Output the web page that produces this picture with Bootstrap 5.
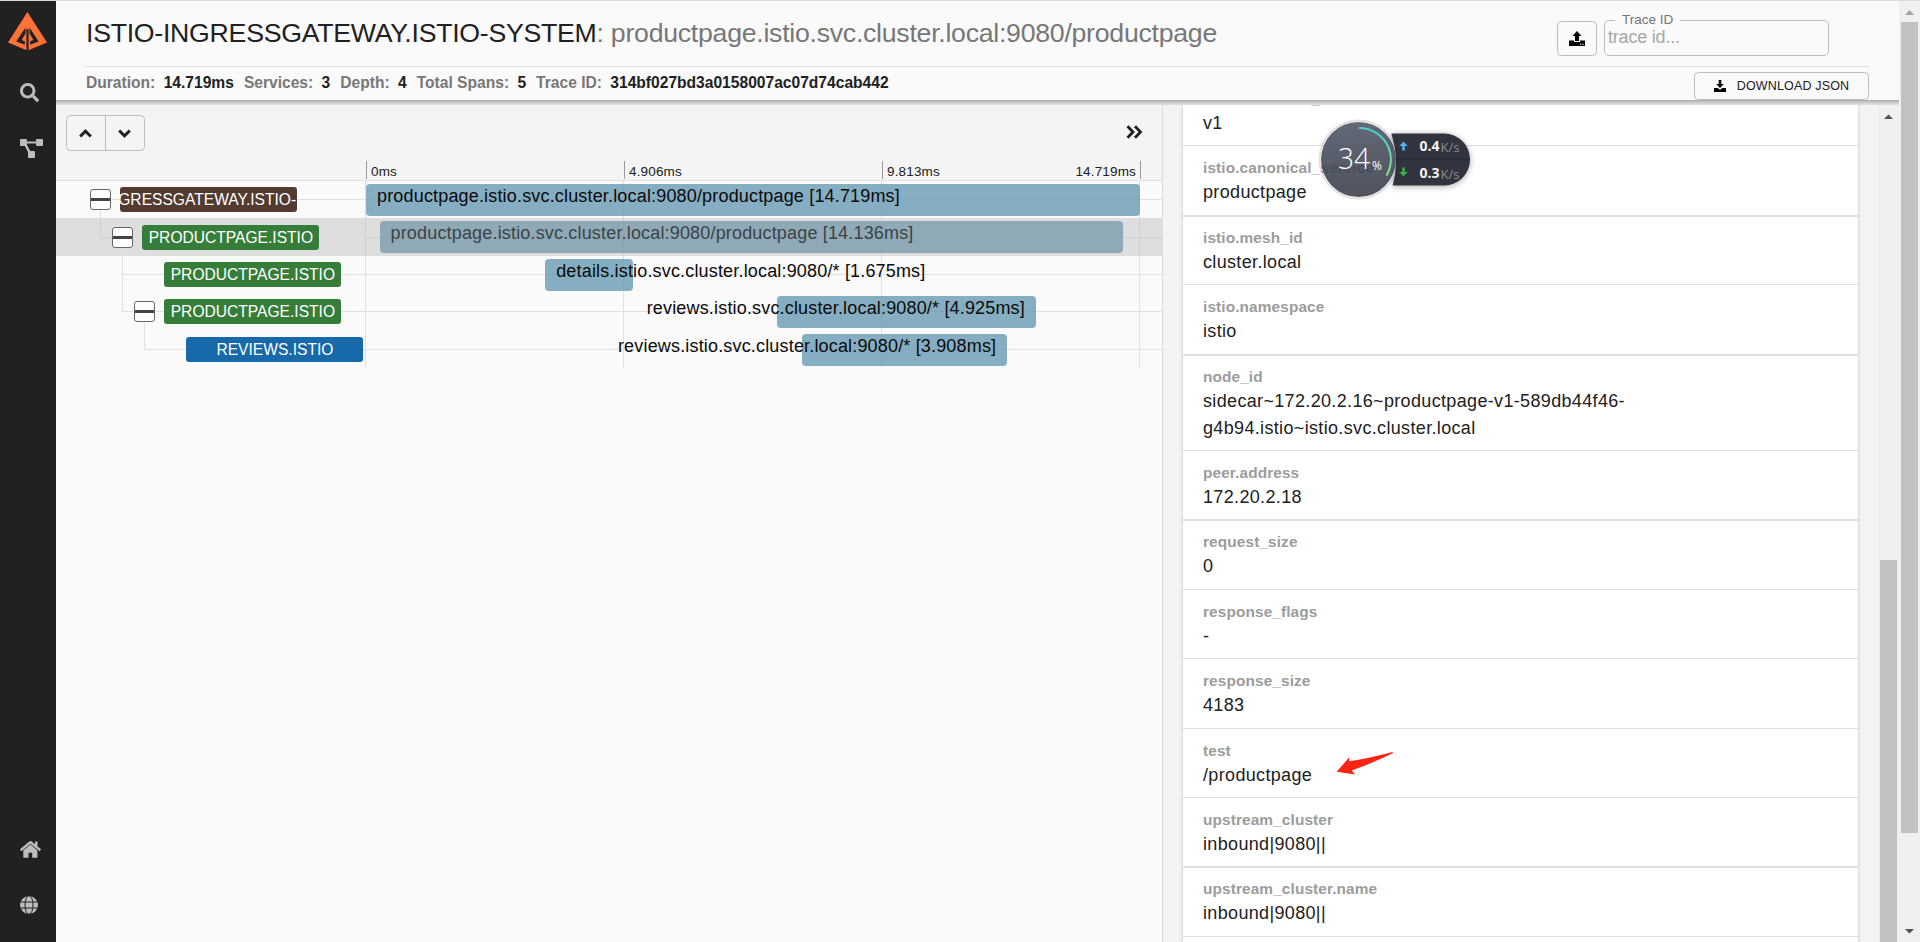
<!DOCTYPE html>
<html lang="en">
<head>
<meta charset="utf-8">
<meta name="viewport" content="width=device-width, initial-scale=1">
<title>Zipkin trace</title>
<link href="https://cdn.jsdelivr.net/npm/bootstrap@5.3.0/dist/css/bootstrap.min.css" rel="stylesheet">
<script src="https://cdn.jsdelivr.net/npm/bootstrap@5.3.0/dist/js/bootstrap.bundle.min.js"></script>
<style>
body{font-family:"Liberation Sans",Arial,sans-serif;font-size:18px;line-height:27px;letter-spacing:.169px;color:#212121;background:#fafafa;height:942px}
svg{display:block;flex:none}
.app{height:942px;border-top:1px solid #d9dcdb}
.side{width:56px;background:#212121;flex:none}
.side svg{fill:#bdbdbd;margin-left:20px}
.main{width:1843px;flex:none}
.top{height:99px;padding:0 30px;background:#fafafa;flex:none;position:relative;z-index:2}
.shade{height:5px;flex:none;background:linear-gradient(#a6a6a6,#c4c4c4 35%,#e2e2e2)}
.title-row{height:66px;border-bottom:1px solid #dfdfdf}
.trace-title{font-size:26.700px;line-height:32px;letter-spacing:-.270px;padding-top:16px;white-space:nowrap;margin:0;font-weight:400}
.trace-title span{color:#777}
.stats{font-size:15.6px;font-weight:700;letter-spacing:0;line-height:22px;padding-top:5px;gap:10px;color:#777}
.stats b{color:#212121;margin-left:4px}
.obtn{border:1px solid #bdbdbd;border-radius:4.5px;background:transparent;display:flex;align-items:center;justify-content:center;padding:0;color:#212121}
.up{width:40px;height:35px;margin-top:20px;margin-right:7px}
.field{width:225px;height:46px;margin:10px 40px 0 0}
.field fieldset{height:45px;border:1px solid #bdbdbd;border-radius:5px;padding:0 3px;min-width:0}
.field legend{float:none;width:auto;font-size:13.5px;line-height:18px;letter-spacing:0;color:#757575;margin:0 0 0 7px;padding:0 7px}
.field .ph{color:#a7a7a7;line-height:20px;margin-top:-2px;letter-spacing:-.2px}
.dl{width:175px;height:28px;font-size:12.500px;letter-spacing:.150px;gap:11px;margin-top:5px;line-height:20px}
.left{width:1107px;border-right:1px solid #dcdcdc;flex:none}
.tools{height:76px;background:#f4f4f4;border-bottom:1px solid #e0e0e0;position:relative}
.pair{margin:10px 0 0 10px;width:79px;height:36px}
.pair div{flex:1;height:100%;display:flex;align-items:center;justify-content:center;padding-right:1px}
.pair div+div{border-left:1px solid #bdbdbd}
.axis{position:absolute;left:310px;bottom:1px;width:775px;height:18px;font-size:13.5px;line-height:22px;letter-spacing:.16px}
.axis div{width:258px;flex:none;border-left:1px solid #999;padding-left:4px}
.axis div:last-child{width:259px;border-right:1px solid #999;padding-right:4px}
.chart{position:relative;height:187px}
.lines{position:absolute;left:0;top:0}
.span-row{height:37.4px;position:relative}
.node{width:310px;flex:none}
.tog{width:21px;height:21px;border:1px solid #666;border-radius:3px;background:linear-gradient(#fff 8px,#444 8px,#444 11px,#fff 11px);flex:none}
.svc{width:177px;height:25px;border-radius:3px;color:#fff;font-size:15.6px;line-height:26px;letter-spacing:0;overflow:hidden;display:flex;justify-content:center;white-space:nowrap;flex:none}
.track{width:774px;height:100%;padding-top:3px;flex:none}
.dur{height:32px;border-radius:4px;background:rgba(101,153,178,.78);position:relative;color:#0a0a0a}
.dur span{position:absolute;top:-1px;left:11px;line-height:27px;white-space:nowrap}
.dur.rt span{left:auto;right:11px}
.dur.picked{color:#3c4246;background:rgba(120,155,171,.78)}
.right{background:#f4f4f4;width:715px;padding-left:19px;overflow:hidden;flex:none}
.paper{width:677px;background:#fff;border:1px solid #dedede;margin-top:-29px;box-shadow:0 1px 3px rgba(0,0,0,.1)}
.tag{height:69.4px;border-bottom:1px solid #e0e0e0;padding:11px 20px 0}
.tag.two{height:96.4px}
.tag.thick{box-shadow:0 1px 0 #e0e0e0}
.tag h6{font-size:15.4px;line-height:22px;font-weight:700;letter-spacing:.11px;color:#9c9c9c;margin:0}
.tag p{margin:0;width:440px;letter-spacing:.340px}
.bar-v{width:21px;background:#f0f0f0;flex:none;padding:0 2px}
.knob{width:17px;background:#c1c1c1}
.meter{position:absolute;left:1318px;top:117px;z-index:5}
.mark-arrow{position:absolute;left:1336px;top:750px;z-index:5}
</style>
</head>
<body class="overflow-hidden">
<div class="app d-flex">
  <nav class="side d-flex flex-column">
    <svg width="40" height="40" viewBox="0 0 40 40" style="margin:11px 0 0 8px;fill:#fe7139"><path d="M19.4 0 39 30.500 20.300 38.200V17.500H18.700V38.200L0 30.500Z"/><path d="M17.500 15.500 8.300 29.500 16.800 32.800V29.300L13.600 28 17.500 21.500ZM21.500 15.500 30.700 29.500 22.200 32.800V29.300L25.400 28 21.500 21.500ZM18.600 17h1.800V38.500h-1.800Z" fill="#212121"/></svg>
    <svg width="19" height="19" viewBox="0 0 512 512" style="margin-top:31px"><path d="M505 442.700 405.300 343c-4.500-4.500-10.600-7-17-7H372c27.600-35.300 44-79.700 44-128C416 93.100 322.900 0 208 0S0 93.100 0 208s93.100 208 208 208c48.300 0 92.700-16.400 128-44v16.300c0 6.400 2.500 12.500 7 17l99.700 99.700c9.400 9.400 24.600 9.400 33.900 0l28.300-28.300c9.400-9.400 9.400-24.600.1-34zM208 336c-70.700 0-128-57.200-128-128 0-70.700 57.200-128 128-128 70.700 0 128 57.200 128 128 0 70.700-57.200 128-128 128z"/></svg>
    <svg width="23" height="19" viewBox="0 0 23 19" style="margin-top:37px"><path d="M1 0h5q1 0 1 1v1.500h9V1q0-1 1-1h5q1 0 1 1v5q0 1-1 1h-5q-1 0-1-1V4.500H7V6l3.200 6H14q1 0 1 1v5q0 1-1 1H9q-1 0-1-1v-5L4.800 7H1Q0 7 0 6V1Q0 0 1 0Z"/></svg>
    <svg class="mt-auto" width="21" height="17" viewBox="0 0 21 17"><path d="M10.500 3.500 3.300 9.500V16q0 .7.700.7h4.500v-5h3.700v5h4.500q.7 0 .7-.7V9.500ZM20.700 8 17.500 5.300V.5H15v2.700L11.700.5q-1.200-1-2.400 0L.3 8q-.5.500 0 1l.7.800q.5.400 1 0l8.500-7 8.500 7q.5.400 1 0l.7-.8q.5-.500 0-1Z"/></svg>
    <svg width="18" height="18" viewBox="0 0 18 18" style="margin-top:38px;margin-bottom:28px"><circle cx="9" cy="9" r="9"/><g fill="none" stroke="#212121" stroke-width="1"><ellipse cx="9" cy="9" rx="4" ry="9.300"/><path d="M0 6h18M0 12h18"/></g></svg>
  </nav>
  <div class="main d-flex flex-column">
    <header class="top">
      <div class="title-row d-flex">
        <h1 class="trace-title me-auto">ISTIO-INGRESSGATEWAY.ISTIO-SYSTEM<span>: productpage.istio.svc.cluster.local:9080/productpage</span></h1>
        <button class="obtn up"><svg width="16" height="15" viewBox="0 0 16 15"><path d="M8 0l4.500 5H10v5H6V5H3.500ZM0 9.500h5V11h6V9.500h5V15H0Z"/><path d="M11 12.700h1.300v1H11zM13.400 12.700h1.300v1h-1.300z" fill="#fff"/></svg></button>
        <div class="field"><fieldset><legend>Trace ID</legend><div class="ph">trace id...</div></fieldset></div>
      </div>
      <div class="d-flex">
        <div class="stats d-flex me-auto"><span>Duration: <b>14.719ms</b></span><span>Services: <b>3</b></span><span>Depth: <b>4</b></span><span>Total Spans: <b>5</b></span><span>Trace ID: <b>314bf027bd3a0158007ac07d74cab442</b></span></div>
        <button class="obtn dl"><svg width="12" height="12" viewBox="0 0 12 12"><path d="M4.700 0h2.600v4h2.500L6 8 2.200 4h2.500ZM0 8h3.500L6 9.800 8.500 8H12v4H0Z"/></svg>DOWNLOAD JSON</button>
      </div>
    </header>
    <div class="shade"></div>
    <div class="d-flex flex-grow-1" style="min-height:0">
      <section class="left">
        <div class="tools d-flex align-items-start justify-content-between">
          <div class="obtn pair"><div><svg width="13" height="9" viewBox="0 0 13 9" fill="none" stroke="#212121" stroke-width="3"><path d="M1.200 7.500 6.500 2.200 11.800 7.500"/></svg></div><div><svg width="13" height="9" viewBox="0 0 13 9" fill="none" stroke="#212121" stroke-width="3"><path d="M1.200 1.500 6.500 6.800 11.800 1.500"/></svg></div></div>
          <svg width="17" height="14" viewBox="0 0 17 14" fill="none" stroke="#212121" stroke-width="2.800" style="margin:20px 19px 0 0"><path d="M1.500 1.200 7 7 1.500 12.800M9 1.200 14.500 7 9 12.800"/></svg>
          <div class="axis d-flex"><div>0ms</div><div>4.906ms</div><div class="d-flex justify-content-between"><span>9.813ms</span><span>14.719ms</span></div></div>
        </div>
        <div class="chart">
          <svg class="lines" width="1106" height="187" viewBox="0 0 1106 187" fill="none" stroke="#e0e0e0" shape-rendering="crispEdges"><path d="M0 37h1106v38H0z" fill="#dedede" stroke="none"/><path d="M44 18.500H1106M44 18.500V56M66 93.500H1106M66 56V131M66 130.500H1106M88 131V168.500H1106M309.500 0V187M567.500 0V187M825.500 0V187M1083.500 0V187"/><path d="M309 56.500H1106M309.500 37V75M567.500 37V75M825.500 37V75M1083.500 37V75M44.500 37V56H66" stroke="#d0d0d0"/></svg>
          <div class="span-row d-flex"><div class="node d-flex align-items-center" style="padding-left:34px;gap:9px"><i class="tog"></i><div class="svc" style="background:#543b32">ISTIO-INGRESSGATEWAY.ISTIO-SYSTEM</div></div><div class="track"><div class="dur" style="width:100%"><span>productpage.istio.svc.cluster.local:9080/productpage [14.719ms]</span></div></div></div>
          <div class="span-row d-flex"><div class="node d-flex align-items-center" style="padding-left:56px;gap:9.400px"><i class="tog"></i><div class="svc" style="background:#367d3a">PRODUCTPAGE.ISTIO</div></div><div class="track"><div class="dur picked" style="margin-left:1.75%;width:96.040%"><span>productpage.istio.svc.cluster.local:9080/productpage [14.136ms]</span></div></div></div>
          <div class="span-row d-flex"><div class="node d-flex align-items-center" style="padding-left:108.400px"><div class="svc" style="background:#367d3a">PRODUCTPAGE.ISTIO</div></div><div class="track"><div class="dur" style="margin-left:23.150%;width:11.380%"><span>details.istio.svc.cluster.local:9080/* [1.675ms]</span></div></div></div>
          <div class="span-row d-flex"><div class="node d-flex align-items-center" style="padding-left:78px;gap:9.400px"><i class="tog"></i><div class="svc" style="background:#367d3a">PRODUCTPAGE.ISTIO</div></div><div class="track"><div class="dur rt" style="margin-left:53.100%;width:33.460%"><span>reviews.istio.svc.cluster.local:9080/* [4.925ms]</span></div></div></div>
          <div class="span-row d-flex"><div class="node d-flex align-items-center" style="padding-left:130.400px"><div class="svc" style="background:#1769aa">REVIEWS.ISTIO</div></div><div class="track"><div class="dur rt" style="margin-left:56.300%;width:26.550%"><span>reviews.istio.svc.cluster.local:9080/* [3.908ms]</span></div></div></div>
        </div>
      </section>
      <section class="right">
        <div class="paper">
          <div class="tag"><h6>istio.canonical_revision</h6><p>v1</p></div>
          <div class="tag thick"><h6>istio.canonical_service</h6><p>productpage</p></div>
          <div class="tag"><h6>istio.mesh_id</h6><p>cluster.local</p></div>
          <div class="tag thick"><h6>istio.namespace</h6><p>istio</p></div>
          <div class="tag two"><h6>node_id</h6><p>sidecar~172.20.2.16~productpage-v1-589db44f46-<br>g4b94.istio~istio.svc.cluster.local</p></div>
          <div class="tag thick"><h6>peer.address</h6><p>172.20.2.18</p></div>
          <div class="tag"><h6>request_size</h6><p>0</p></div>
          <div class="tag"><h6>response_flags</h6><p>-</p></div>
          <div class="tag"><h6>response_size</h6><p>4183</p></div>
          <div class="tag"><h6>test</h6><p>/productpage</p></div>
          <div class="tag thick"><h6>upstream_cluster</h6><p>inbound|9080||</p></div>
          <div class="tag"><h6>upstream_cluster.name</h6><p>inbound|9080||</p></div>
          <div class="tag"></div>
        </div>
      </section>
      <div class="bar-v d-flex flex-column"><svg width="17" height="21" viewBox="0 0 17 21"><path d="M4 14h9L8.500 9.500Z" fill="#505050"/></svg><div class="knob flex-grow-1" style="margin-top:434px"></div></div>
    </div>
  </div>
  <div class="bar-v d-flex flex-column"><svg width="17" height="21" viewBox="0 0 17 21"><path d="M4 14h9L8.500 9Z" fill="#a3a3a3"/></svg><div class="knob" style="height:811px"></div><svg class="mt-auto" width="17" height="21" viewBox="0 0 17 21"><path d="M4 8h9L8.500 12.500Z" fill="#505050"/></svg></div>
</div>
<svg class="meter" width="160" height="90" viewBox="0 0 160 90" font-family="Open Sans, Noto Sans, sans-serif" letter-spacing="0">
  <defs><linearGradient id="g" x1="0" y1="0" x2="0" y2="1"><stop offset="0" stop-color="#43d0cd"/><stop offset="1" stop-color="#8fdc8a"/></linearGradient><linearGradient id="c" x1="0" y1="0" x2="0" y2="1"><stop offset="0" stop-color="#4b5263"/><stop offset="1" stop-color="#353947"/></linearGradient><clipPath id="p"><path d="M66 0h94v90H66q24-45 0-90Z"/></clipPath></defs>
  <g style="filter:drop-shadow(0 1px 3px rgba(0,0,0,.35))"><rect x="50" y="16.500" width="102" height="52" rx="26" fill="#31343e" clip-path="url(#p)"/></g>
  <circle cx="40.500" cy="42.500" r="39" fill="none" stroke="#000" stroke-opacity=".12" stroke-width="2"/>
  <circle cx="40.500" cy="42.500" r="37.500" fill="url(#c)" fill-opacity=".87"/>
  <path d="M78 42.500h74" stroke="#2a2d36"/>
  <path d="M41 11A31.500 31.500 0 0 1 68.500 58.500" fill="none" stroke="url(#g)" stroke-width="2"/>
  <text x="20" y="52" font-size="29" font-weight="300" fill="#fff" textLength="32" lengthAdjust="spacingAndGlyphs">34</text><text x="54" y="52.500" font-size="12" fill="#fff">%</text>
  <path d="M85.500 24.500l-4.200 4.500h2.900v4.500h2.600V29h2.900Z" fill="#4fb4ef"/><path d="M85.500 59.500l-4.200-4.500h2.900v-4.500h2.600V55h2.900Z" fill="#35b344"/>
  <g font-size="14" font-weight="700" fill="#f1f1f3"><text x="101.500" y="33.500">0.4</text><text x="101.500" y="60.500">0.3</text></g>
  <g font-size="13" fill="#8b8e97"><text x="122.500" y="34.500">K/s</text><text x="122.500" y="61.500">K/s</text></g>
</svg>
<svg class="mark-arrow" width="58" height="26" viewBox="0 0 58 26"><path d="M.7 21.700 13.300 7.300 13 11.300Q30 9 56.500 2L57 3Q38 12.500 15.800 20.500L19 24.500Z" fill="#ff2314"/></svg>
</body>
</html>
